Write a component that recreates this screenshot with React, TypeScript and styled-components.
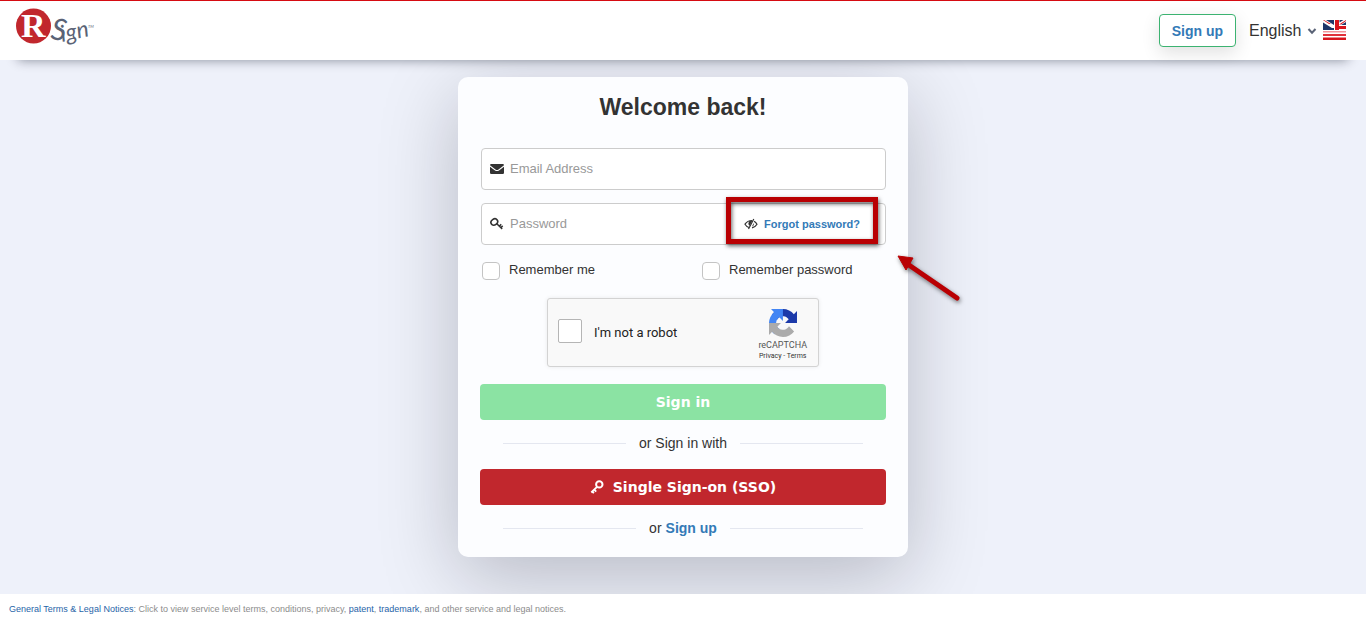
import React from "react";
import styled, { createGlobalStyle } from "styled-components";

const GlobalStyle = createGlobalStyle`
  *, *::before, *::after { box-sizing: border-box; }
  body {
    margin: 0;
    background: #fff;
    color: #333;
    font-family: "Liberation Sans", Arial, sans-serif;
    font-size: 14px;
    line-height: 20px;
  }
  a { color: #337ab7; text-decoration: none; }
  button, input, select { font: inherit; }
`;

const Page = styled.div`
  display: flex;
  flex-direction: column;
  min-height: 100vh;
`;

const Header = styled.header`
  position: relative;
  z-index: 1;
  display: flex;
  align-items: center;
  justify-content: space-between;
  height: 60px;
  padding: 0 20px 0 15px;
  border-top: 1px solid #d60b12;
  background: #fff;
  box-shadow: 0 18px 12px -18px rgba(0, 10, 30, 0.45);
`;

const HeaderTools = styled.div`
  display: flex;
  align-items: center;
  gap: 13px;
`;

const SignUpButton = styled.button`
  height: 33px;
  padding: 0 12px;
  border: 1px solid #3cb371;
  border-radius: 4px;
  background: #fff;
  color: #337ab7;
  font-weight: bold;
  box-shadow: 0 6px 18px rgba(0, 0, 0, 0.12);
`;

const Language = styled.label`
  display: flex;
  align-items: center;
  gap: 6px;
`;

const SelectBox = styled.span`
  display: grid;
  align-items: center;
  & > * { grid-area: 1 / 1; }
  & > svg { justify-self: end; pointer-events: none; }
`;

const LanguageSelect = styled.select`
  width: 68px;
  height: 24px;
  padding: 0;
  border: 0;
  appearance: none;
  background: transparent;
  color: #333;
  font-size: 16px;
`;

const Main = styled.main`
  flex: 1;
  display: flex;
  align-items: flex-start;
  justify-content: center;
  padding: 17px 16px 37px;
  overflow: hidden;
  background: #eef1fa;
`;

const Card = styled.form`
  position: relative;
  display: flex;
  flex-direction: column;
  width: 100%;
  max-width: 450px;
  padding: 16px 22px 19px;
  border-radius: 10px;
  background: #fcfdff;
  box-shadow: 0 20px 80px rgba(0, 0, 20, 0.23);
`;

const Title = styled.h1`
  margin: 0 0 27px;
  font-size: 23px;
  line-height: 28px;
  text-align: center;
`;

const Fields = styled.div`
  display: grid;
  gap: 13px;
  padding-left: 1px;
`;

const Field = styled.div`
  position: relative;
  display: flex;
  align-items: center;
  gap: 6px;
  height: 42px;
  padding: 0 25px 0 8px;
  border: 1px solid #ccc;
  border-radius: 4px;
  background: #fff;
`;

const TextInput = styled.input`
  flex: 1;
  min-width: 0;
  padding: 0;
  border: 0;
  outline: 0;
  background: transparent;
  font-size: 13px;
  &::placeholder { color: #999; opacity: 1; }
`;

const RevealButton = styled.button`
  display: flex;
  padding: 0;
  border: 0;
  background: none;
`;

const ForgotLink = styled.a`
  font-size: 11px;
  font-weight: bold;
`;

const Highlight = styled.span`
  position: absolute;
  top: -7px;
  right: 7px;
  width: 152px;
  height: 47px;
  border: 5px solid #b90003;
  filter: drop-shadow(1px 2px 2px rgba(0, 0, 0, 0.6));
  pointer-events: none;
`;

const Pointer = styled.svg`
  position: absolute;
  left: calc(100% - 16px);
  top: 174px;
  filter: drop-shadow(1px 2px 2px rgba(0, 0, 0, 0.5));
  pointer-events: none;
`;

const Options = styled.div`
  display: grid;
  grid-template-columns: 220px 1fr;
  margin-top: 15px;
  padding-left: 2px;
`;

const Option = styled.label`
  display: flex;
  align-items: flex-start;
  gap: 9px;
  font-size: 13px;
`;

const CheckBox = styled.input<{ $large?: boolean }>`
  appearance: none;
  flex: none;
  width: ${(p) => (p.$large ? 24 : 18)}px;
  height: ${(p) => (p.$large ? 24 : 18)}px;
  margin: ${(p) => (p.$large ? "0 0 4px" : "2px 0 0")};
  border: 1px solid ${(p) => (p.$large ? "#b5b5b5" : "#c4c4c4")};
  border-radius: ${(p) => (p.$large ? 2 : 4)}px;
  background: #fff;
`;

const Captcha = styled.div`
  display: flex;
  align-items: center;
  justify-content: space-between;
  align-self: center;
  width: 272px;
  height: 69px;
  margin: 18px 0 17px;
  padding: 0 11px 0 10px;
  border: 1px solid #d3d3d3;
  border-radius: 3px;
  background: #f9f9f9;
  color: #222;
  font-family: Roboto, sans-serif;
  box-shadow: 0 0 4px rgba(0, 0, 0, 0.08);
`;

const CaptchaLabel = styled.label`
  display: flex;
  align-items: center;
  gap: 12px;
  font-size: 13px;
`;

const CaptchaBrand = styled.div`
  display: flex;
  flex-direction: column;
  align-items: center;
  padding-top: 6px;
  color: #555;
  font-size: 9px;
  line-height: 11px;
  & > span { margin-top: 3px; }
`;

const CaptchaLinks = styled.small`
  font-size: 7px;
  line-height: 11px;
  & a { color: #333; }
`;

const SubmitButton = styled.button<{ $tone: string }>`
  display: flex;
  align-items: center;
  justify-content: center;
  gap: 9px;
  height: 36px;
  border: 0;
  border-radius: 4px;
  background: ${(p) => p.$tone};
  color: #fff;
  font-family: "DejaVu Sans", sans-serif;
  font-size: 14px;
  font-weight: bold;
`;

const Divider = styled.div`
  display: flex;
  align-items: center;
  gap: 13px;
  padding: 0 23px;
  margin-top: 13px;
  &::before, &::after {
    content: "";
    flex: 1;
    height: 1px;
    background: #e4e7f0;
  }
  & + button { margin-top: 16px; }
`;

const SignUpPrompt = styled.span`
  display: flex;
  gap: 4px;
  & a { font-weight: bold; }
`;

const Footer = styled.footer`
  padding: 5px 9px 6px;
  background: #fff;
  color: #8c8c8c;
  font-size: 9px;
  & a { color: #1f64a8; }
`;

const LogoArt = styled.svg`
  overflow: visible;
`;

const Logo = () => (
  <LogoArt width="80" height="44" viewBox="0 0 80 44" role="img" aria-label="RSign">
    <circle cx="18.500" cy="17" r="17.500" fill="#c1272d" />
    <text x="6" y="28" fontFamily="Liberation Serif" fontWeight="bold" fontSize="34" fill="#fff">R</text>
    <g fill="#5a6376" fontFamily="Lato" fontStyle="italic">
      <text x="35" y="30" fontSize="30" transform="rotate(8 35 30)">S</text>
      <text x="47" y="33" fontSize="23" transform="rotate(-12 47 33)">ign</text>
      <text x="73" y="19" fontSize="4">TM</text>
    </g>
  </LogoArt>
);

const Flag = () => (
  <svg width="23" height="21" viewBox="0 0 23 21" aria-hidden="true">
    <path fill="#fff" d="M0 0h23v21H0z" />
    <path fill="#1f3668" d="M0 2.500l9 5.500H0zM3 0h8v5zM0 8h11v2H0zM16.500 0h4l-4 2.500zM18 5l5-3v3z" />
    <path fill="#d8141c" d="M12 0h4v10h-4zM16 6h7v3h-7zM23 0v1l-5 3.500h-2zM0 0h1l7 4H6z" />
    <path fill="#f2959a" d="M0 11h23v1.500H0z" />
    <path fill="#e0303a" d="M0 14h23v2H0z" />
    <path fill="#d8141c" d="M0 17.500h23v2.500H0z" />
  </svg>
);

const EnvelopeIcon = () => (
  <svg width="14" height="12" viewBox="0 0 14 12" fill="#333" aria-hidden="true">
    <path d="M0 2.200Q0 1 1.200 1h11.600Q14 1 14 2.200L8.500 6.400Q7 7.500 5.500 6.400zM0 3.700l5 3.700q2 1.400 4 0l5-3.700v6.100q0 1.200-1.200 1.200H1.200Q0 11 0 9.800z" />
  </svg>
);

const PasswordKeyIcon = () => (
  <svg width="14" height="14" viewBox="0 0 14 14" fill="none" stroke="#333" aria-hidden="true">
    <ellipse cx="4.300" cy="5" rx="3.500" ry="2.900" strokeWidth="1.600" transform="rotate(-35 4.300 5)" />
    <path strokeWidth="1.500" d="M6.500 6.500l5.700 5.400M9.500 9l1.700-1.800M11 10.500l1.700-1.600" />
  </svg>
);

const EyeSlashIcon = () => (
  <svg width="14" height="12" viewBox="0 0 14 12" fill="none" stroke="#333" aria-hidden="true">
    <path strokeWidth="1.200" d="M5 9.500Q2.500 8.700 1 6.200 3.500 2.500 8 2.500M10 3.300q1.900 1 3 2.900-1.900 3.100-5 3.700" />
    <path fill="#333" stroke="none" d="M5 3.200L8.500 2.600 5.500 8Q3.500 5.800 5 3.200zM9.700 5q.7 2.500-1.700 3.500z" />
    <path strokeWidth="1.200" d="M9.800 1L4.500 11" />
  </svg>
);

const SsoKeyIcon = () => (
  <svg width="14" height="14" viewBox="0 0 14 14" fill="none" stroke="#fff" aria-hidden="true">
    <circle cx="9.300" cy="4.400" r="3.200" strokeWidth="2" />
    <path strokeWidth="1.900" d="M7 6.800L1.300 12.500M4.200 9.600l2 2M2.200 11.500l1.700 1.700" />
  </svg>
);

const RecaptchaIcon = () => (
  <svg width="28" height="28" viewBox="0 0 64 64" aria-hidden="true">
    <path fill="#1c3aa9" d="M64 31.955l-.033-1.370V4.687l-7.160 7.160C50.948 4.674 42.033.093 32.050.093c-10.400 0-19.622 4.960-25.458 12.640l11.736 11.860a15.550 15.550 0 0 1 4.754-5.334c2.050-1.600 4.952-2.906 8.968-2.906.485 0 .860.057 1.135.163 4.976.393 9.288 3.140 11.828 7.124l-8.307 8.307L64 31.953" />
    <path fill="#4285f4" d="M31.862.094l-1.370.033H4.594l7.160 7.160C4.580 13.147 0 22.060 0 32.046c0 10.400 4.960 19.622 12.640 25.458L24.500 45.768a15.550 15.550 0 0 1-5.334-4.754c-1.600-2.050-2.906-4.952-2.906-8.968 0-.485.057-.860.163-1.135.393-4.976 3.140-9.288 7.124-11.828l8.307 8.307L31.860.095" />
    <path fill="#ababab" d="M.001 32.045l.033 1.370v25.898l7.160-7.160c5.860 7.173 14.774 11.754 24.760 11.754 10.400 0 19.622-4.960 25.458-12.640l-11.736-11.860a15.550 15.550 0 0 1-4.754 5.334c-2.050 1.600-4.952 2.906-8.968 2.906-.485 0-.860-.057-1.135-.163-4.976-.393-9.288-3.140-11.828-7.124l8.307-8.307c-10.522.040-22.400.066-27.295-.005" />
  </svg>
);

export default function App() {
  return (
    <Page>
      <GlobalStyle />
      <Header>
        <Logo />
        <HeaderTools>
          <SignUpButton type="button">Sign up</SignUpButton>
          <Language>
            <SelectBox>
              <LanguageSelect aria-label="Language" defaultValue="en">
                <option value="en">English</option>
              </LanguageSelect>
              <svg width="10" height="8" viewBox="0 0 10 8" fill="none" aria-hidden="true">
                <path d="M1.500 2L5 5.800 8.500 2" stroke="#5a6376" strokeWidth="2" />
              </svg>
            </SelectBox>
            <Flag />
          </Language>
        </HeaderTools>
      </Header>

      <Main>
        <Card onSubmit={(e) => e.preventDefault()}>
          <Title>Welcome back!</Title>
          <Fields>
            <Field>
              <EnvelopeIcon />
              <TextInput type="email" aria-label="Email Address" placeholder="Email Address" />
            </Field>
            <Field>
              <PasswordKeyIcon />
              <TextInput type="password" aria-label="Password" placeholder="Password" />
              <RevealButton type="button" aria-label="Show password">
                <EyeSlashIcon />
              </RevealButton>
              <ForgotLink href="#forgot">Forgot password?</ForgotLink>
              <Highlight />
            </Field>
          </Fields>

          <Options>
            <Option>
              <CheckBox type="checkbox" />
              Remember me
            </Option>
            <Option>
              <CheckBox type="checkbox" />
              Remember password
            </Option>
          </Options>

          <Captcha>
            <CaptchaLabel>
              <CheckBox type="checkbox" $large />
              I'm not a robot
            </CaptchaLabel>
            <CaptchaBrand>
              <RecaptchaIcon />
              <span>reCAPTCHA</span>
              <CaptchaLinks>
                <a href="#privacy">Privacy</a> - <a href="#terms">Terms</a>
              </CaptchaLinks>
            </CaptchaBrand>
          </Captcha>

          <SubmitButton type="submit" $tone="#8be3a3">Sign in</SubmitButton>
          <Divider>or Sign in with</Divider>
          <SubmitButton type="button" $tone="#c1272d">
            <SsoKeyIcon />
            Single Sign-on (SSO)
          </SubmitButton>
          <Divider>
            <SignUpPrompt>
              or <a href="#signup">Sign up</a>
            </SignUpPrompt>
          </Divider>

          <Pointer width="76" height="56" viewBox="0 0 76 56" aria-hidden="true">
            <path d="M14 12L65 47" stroke="#b90003" strokeWidth="5" strokeLinecap="round" />
            <path d="M6 5l15 2-7 12z" fill="#b90003" stroke="#b90003" strokeLinejoin="round" />
          </Pointer>
        </Card>
      </Main>

      <Footer>
        <a href="#legal">General Terms &amp; Legal Notices</a>: Click to view service level terms, conditions,
        privacy, <a href="#patent">patent</a>, <a href="#trademark">trademark</a>, and other service and legal
        notices.
      </Footer>
    </Page>
  );
}
